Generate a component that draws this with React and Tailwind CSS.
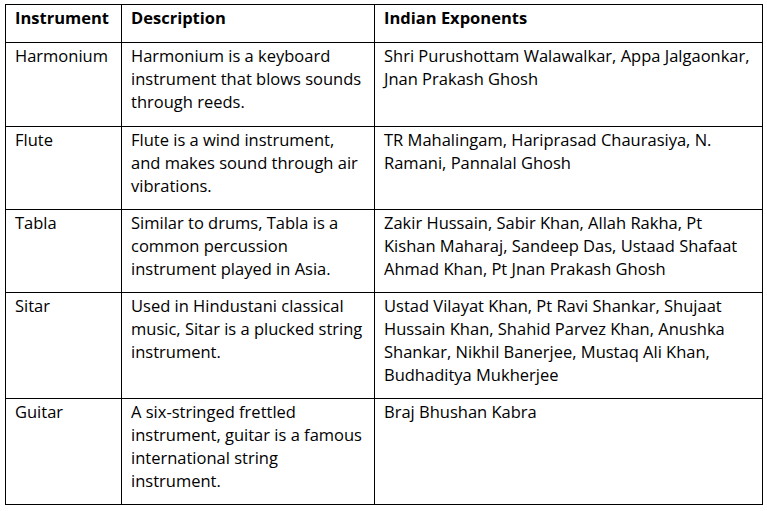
const rows = [
  {
    name: 'Harmonium',
    desc: ['Harmonium is a keyboard', 'instrument that blows sounds', 'through reeds.'],
    exp: ['Shri Purushottam Walawalkar, Appa Jalgaonkar,', 'Jnan Prakash Ghosh'],
  },
  {
    name: 'Flute',
    desc: ['Flute is a wind instrument,', 'and makes sound through air', 'vibrations.'],
    exp: ['TR Mahalingam, Hariprasad Chaurasiya, N.', 'Ramani, Pannalal Ghosh'],
  },
  {
    name: 'Tabla',
    desc: ['Similar to drums, Tabla is a', 'common percussion', 'instrument played in Asia.'],
    exp: ['Zakir Hussain, Sabir Khan, Allah Rakha, Pt', 'Kishan Maharaj, Sandeep Das, Ustaad Shafaat', 'Ahmad Khan, Pt Jnan Prakash Ghosh'],
  },
  {
    name: 'Sitar',
    desc: ['Used in Hindustani classical', 'music, Sitar is a plucked string', 'instrument.'],
    exp: [
      'Ustad Vilayat Khan, Pt Ravi Shankar, Shujaat',
      'Hussain Khan, Shahid Parvez Khan, Anushka',
      'Shankar, Nikhil Banerjee, Mustaq Ali Khan,',
      'Budhaditya Mukherjee',
    ],
  },
  {
    name: 'Guitar',
    desc: ['A six-stringed frettled', 'instrument, guitar is a famous', 'international string', 'instrument.'],
    exp: ['Braj Bhushan Kabra'],
  },
];

function Lines({ lines }) {
  return lines.map((line) => (
    <span key={line} className="block whitespace-nowrap">
      {line}
    </span>
  ));
}

export default function App() {
  const cell = 'border border-black align-top pl-[9px] pr-1 pt-[1px]';

  return (
    <div className="h-[511px] w-[767px] bg-white pl-[5px] pt-[4px] font-['Open_Sans',sans-serif] text-[16.5px] leading-[23px] text-black">
      <table className="w-[757px] table-fixed border-collapse">
        <colgroup>
          <col className="w-[116px]" />
          <col className="w-[253px]" />
          <col className="w-[388px]" />
        </colgroup>
        <thead>
          <tr className="text-left font-bold">
            <th className={`${cell} pb-[13px]`}>Instrument</th>
            <th className={`${cell} pb-[13px]`}>Description</th>
            <th className={`${cell} pb-[13px]`}>Indian Exponents</th>
          </tr>
        </thead>
        <tbody>
          {rows.map((row, index) => {
            const pad = index === 0 ? 'pb-[13px]' : 'pb-[12px]';

            return (
              <tr key={row.name}>
                <td className={`${cell} ${pad}`}>{row.name}</td>
                <td className={`${cell} ${pad}`}>
                  <Lines lines={row.desc} />
                </td>
                <td className={`${cell} ${pad}`}>
                  <Lines lines={row.exp} />
                </td>
              </tr>
            );
          })}
        </tbody>
      </table>
    </div>
  );
}
